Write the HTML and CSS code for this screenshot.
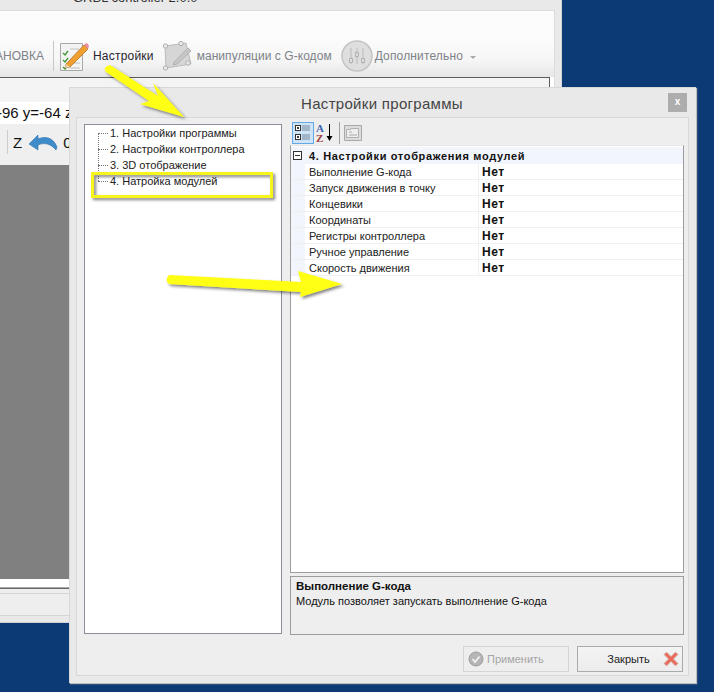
FILE: index.html
```html
<!DOCTYPE html>
<html lang="ru">
<head>
<meta charset="utf-8">
<title>Настройки программы</title>
<link rel="stylesheet" href="styles.css">
</head>
<body>
<div class="desktop">
  <section class="main-window">
    <div class="main-title"><span>GRBL controller 2.0.0</span></div>
    <div class="main-client">
      <div class="ribbon-tabs"></div>
      <div class="ribbon">
        <span class="rb-text dim clip">АНОВКА</span>
        <span class="rb-sep"></span>
        <svg class="rb-icon" width="31" height="32" viewBox="0 0 31 32">
          <path d="M1.500 3.500h22v27h-22z" fill="#f3f3f3" stroke="#a8a8a8"/>
          <path d="M4 13l2 2 3-4M4 20l2 2 3-4M4 27l2 2 3-4" fill="none" stroke="#3d9a35" stroke-width="1.300"/>
          <path d="M11 9h9M13 23h8M11 28h10" stroke="#c0c0c0"/>
          <path d="M7 24L25 5l4 4-18 18-5 1z" fill="#f0a030" stroke="#a8641a" stroke-width=".7"/>
          <path d="M25 5l2-2q2 0 3 3l-1 3z" fill="#e98fa0"/>
          <path d="M7 24l-1 4 5-1z" fill="#e8d8b8"/>
        </svg>
        <span class="rb-text active">Настройки</span>
        <svg class="rb-icon shape" width="31" height="30" viewBox="0 0 31 30">
          <path d="M3 5L24 2l5 21-25 4z" fill="#d6d6d6" stroke="#bcbcbc"/>
          <g fill="#e8e8e8" stroke="#b0b0b0"><circle cx="3.500" cy="5" r="2.200"/><circle cx="19" cy="2.500" r="2.200"/><circle cx="26" cy="22" r="2.200"/><circle cx="3.500" cy="27" r="2.200"/></g>
          <path d="M12 21l14-14 3 3-14 13-4 1z" fill="#c6c6c6" stroke="#b2b2b2"/>
        </svg>
        <span class="rb-text dim">манипуляции с G-кодом</span>
        <svg class="rb-icon more" width="32" height="32" viewBox="0 0 32 32">
          <circle cx="16" cy="16" r="15" fill="#dedede" stroke="#c4c4c4" stroke-width="1.500"/>
          <path d="M10 8v16M16 8v16M22 8v16" stroke="#bababa"/>
          <path d="M8.500 18.500h3v4h-3zM14.500 12.500h3v4h-3zM20.500 18.500h3v4h-3z" fill="#dedede" stroke="#b0b0b0"/>
        </svg>
        <span class="rb-text dim tight">Дополнительно</span>
        <span class="rb-caret"></span>
      </div>
      <div class="workspace">
        <div class="gap-row"></div>
        <div class="coords">-96 y=-64 z</div>
        <div class="tools">
          <span class="tool-sep"></span>
          <span class="tool-text">Z</span>
          <svg width="30" height="20" viewBox="0 0 30 20">
            <path d="M1 12l9-9v4c7-3 15-2 19 8l-1 3c-5-6-11-8-18-5v5z" fill="#3f8ccb" stroke="#2e6fa8" stroke-width=".6"/>
          </svg>
          <span class="tool-text">0</span>
        </div>
        <div class="view"></div>
        <div class="view-foot"></div>
      </div>
    </div>
    <div class="status-a"></div>
    <div class="status-b"></div>
  </section>

  <section class="dialog">
    <header class="dlg-head">
      <h1 class="dlg-title">Настройки программы</h1>
      <span class="dlg-close">x</span>
    </header>
    <div class="dlg-frame">
      <div class="dlg-body">
        <ul class="tree">
          <li class="tree-item">1. Настройки программы</li>
          <li class="tree-item">2. Настройки контроллера</li>
          <li class="tree-item">3. 3D отображение</li>
          <li class="tree-item">4. Натройка модулей</li>
        </ul>
        <div class="props">
          <div class="props-bar">
            <span class="pb-btn on">
              <svg width="20" height="20" viewBox="0 0 20 20">
                <g fill="#fff" stroke="#333"><rect x="2.500" y="2.500" width="5" height="5"/><rect x="2.500" y="11.500" width="5" height="5"/></g>
                <path d="M4 5h2M4 14h2M5 4v2M5 13v2" stroke="#000"/>
                <path d="M9 3h8M9 5h8M9 7h8M9 12h8M9 14h8M9 16h8" stroke="#7b8797"/>
              </svg>
            </span>
            <span class="pb-btn">
              <svg width="20" height="22" viewBox="0 0 20 22">
                <text x="1" y="10" class="az a">A</text>
                <text x="1" y="20" class="az z">Z</text>
                <path d="M14.500 2v15" stroke="#000"/>
                <path d="M11.500 14h6l-3 5z" fill="#000"/>
              </svg>
            </span>
            <span class="pb-sep"></span>
            <span class="pb-btn dis">
              <svg width="18" height="16" viewBox="0 0 18 16">
                <path d="M.5.5h17v15H.5z" fill="#dcdcdc" stroke="#a8a8a8"/>
                <path d="M2.500 4.500h4v-1h8v9h-12z" fill="#eee" stroke="#b0b0b0"/>
                <path d="M5 7h3M5 10h8" stroke="#aaa"/>
              </svg>
            </span>
          </div>
          <div class="grid-box">
            <div class="cat-row">
              <span class="cat-toggle"></span>
              <span class="cat-name">4. Настройки отображения модулей</span>
            </div>
            <div class="prop-row"><span class="prop-name">Выполнение G-кода</span><span class="prop-val">Нет</span></div>
            <div class="prop-row"><span class="prop-name">Запуск движения в точку</span><span class="prop-val">Нет</span></div>
            <div class="prop-row"><span class="prop-name">Концевики</span><span class="prop-val">Нет</span></div>
            <div class="prop-row"><span class="prop-name">Координаты</span><span class="prop-val">Нет</span></div>
            <div class="prop-row"><span class="prop-name">Регистры контроллера</span><span class="prop-val">Нет</span></div>
            <div class="prop-row"><span class="prop-name">Ручное управление</span><span class="prop-val">Нет</span></div>
            <div class="prop-row"><span class="prop-name">Скорость движения</span><span class="prop-val">Нет</span></div>
          </div>
          <div class="help-box">
            <div class="help-title">Выполнение G-кода</div>
            <div class="help-text">Модуль позволяет запускать выполнение G-кода</div>
          </div>
        </div>
      </div>
      <footer class="dlg-foot">
        <button class="btn disabled" type="button">
          <svg class="btn-ok" width="16" height="16" viewBox="0 0 16 16">
            <circle cx="8" cy="8" r="7" fill="#b5b5b5" stroke="#9c9c9c"/>
            <path d="M4.500 8l2.500 3 4.500-5.500" fill="none" stroke="#f2f2f2" stroke-width="1.800"/>
          </svg>
          <span>Применить</span>
        </button>
        <button class="btn" type="button">
          <span class="btn-label">Закрыть</span>
          <svg class="btn-x" width="16" height="16" viewBox="0 0 16 16">
            <path d="M1 3.500L3.500 1 8 5.500 12.500 1 15 3.500 10.500 8 15 12.500 12.500 15 8 10.500 3.500 15 1 12.500 5.500 8z" fill="#ec6a5c" stroke="#c9c2b8" stroke-width=".8"/>
          </svg>
        </button>
      </footer>
    </div>
  </section>

  <svg class="overlay" width="714" height="692" viewBox="0 0 714 692">
    <defs>
      <filter id="shadow" x="-20%" y="-20%" width="140%" height="140%">
        <feDropShadow dx="2" dy="2" stdDeviation="1.500" flood-color="#000" flood-opacity=".5"/>
      </filter>
    </defs>
    <g filter="url(#shadow)">
      <path d="M106 72Q102 67 110 65L158 96 153 83 184 117 140 104 149 101z" fill="#ffff14"/>
      <path d="M169 275L301 282 298 271 342 284 300 297 301 292 169 284Q164 280 169 275z" fill="#ffff14"/>
      <rect x="92.500" y="173.500" width="179" height="23" fill="none" stroke="#f5f51e" stroke-width="3"/>
    </g>
  </svg>
</div>
</body>
</html>
```

FILE: styles.css
```css
* { box-sizing: border-box; }
html, body { margin: 0; padding: 0; }
body { font-family: "Liberation Sans", Arial, sans-serif; font-size: 11px; color: #111; }
.desktop { position: relative; width: 714px; height: 692px; overflow: hidden; background: #0b3a74; }

/* background window */
.main-window { position: absolute; left: 0; top: 0; width: 562px; height: 623px; background: #e9e9e9; border-right: 1px solid #d5d5d5; border-bottom: 1px solid #d0d0d0; display: flex; flex-direction: column; }
.main-title { height: 10px; flex: none; padding-left: 73px; font-size: 13px; line-height: 13px; color: #333; white-space: nowrap; overflow: hidden; }
.main-title span { display: block; margin-top: -9px; }
.main-client { width: 555px; height: 579px; flex: none; background: #fff; border-top: 1px solid #dcdcdc; border-right: 1px solid #dcdcdc; border-bottom: 1px solid #666; display: flex; flex-direction: column; }
.ribbon-tabs { height: 24px; background: #fcfcfc; flex: none; }
.ribbon { height: 42px; flex: none; display: flex; align-items: center; background: linear-gradient(#fcfcfc, #f6f6f6 60%, #e6e6e6); font-size: 12px; white-space: nowrap; }
.rb-text.clip { width: 44px; overflow: hidden; direction: rtl; text-align: right; }
.rb-text.dim { color: #7d8288; }
.rb-text.active { color: #2a2530; margin-left: 3px; letter-spacing: .2px; }
.rb-sep { width: 1px; height: 30px; background: #c8c8c8; margin: 0 5px 0 9px; }
.rb-icon { flex: none; }
.rb-icon.shape { margin-left: 8px; }
.rb-icon.more { margin-left: 9px; }
.rb-text.dim:not(.clip) { margin-left: 4px; letter-spacing: .05px; }
.rb-text.dim.tight:not(.clip) { margin-left: 2px; letter-spacing: .15px; }
.rb-caret { margin-left: 7px; margin-top: 2px; border: 3px solid transparent; border-top: 3px solid #a8a8a8; border-bottom: 0; width: 0; height: 0; }
.workspace { flex: 1; display: flex; flex-direction: column; min-height: 0; border-top: 1px solid #5c5c5c; border-right: 1px solid #5c5c5c; margin-right: 4px; background: #fff; }
.gap-row { height: 24px; background: #f4f4f4; flex: none; }
.coords { height: 22px; line-height: 22px; font-size: 15px; margin-left: -3px; color: #111; background: #fff; white-space: nowrap; flex: none; }
.tools { height: 41px; flex: none; display: flex; align-items: center; background: #efefef; padding-bottom: 5px; }
.tool-sep { width: 1px; height: 24px; background: #ccc; margin-left: 7px; }
.tool-text { font-size: 15px; margin-left: 5px; }
.tools svg { margin-left: 6px; }
.view { flex: 1; background: #808080; }
.view-foot { height: 9px; background: #fff; border-bottom: 1px solid #aaa; flex: none; }
.status-a { height: 5px; flex: none; background: #eee; border-bottom: 1px solid #d5d5d5; }
.status-b { height: 22px; flex: none; background: #eee; border-bottom: 1px solid #d5d5d5; }

/* settings dialog */
.dialog { position: absolute; left: 69px; top: 87px; width: 627px; height: 596px; background: #e9e9e9; border-top: 1px solid #d8d8d8; border-left: 1px solid #d8d8d8; box-shadow: 1px 1px 1px #bbb; padding: 0 7px 7px 6px; display: flex; flex-direction: column; }
.dlg-head { height: 29px; flex: none; display: flex; align-items: center; justify-content: center; position: relative; }
.dlg-title { margin: 1px 0 0 -1px; font-weight: 400; font-size: 15px; color: #454545; letter-spacing: .3px; }
.dlg-close { position: absolute; right: 2px; top: 5px; width: 19px; height: 19px; background: #adadad; color: #fff; font-weight: 700; font-size: 10px; line-height: 18px; text-align: center; }
.dlg-frame { flex: 1; min-height: 0; background: #eee; border: 1px solid #d8d8d8; display: flex; flex-direction: column; padding: 6px 4px 0 7px; }
.dlg-body { height: 511px; flex: none; display: flex; gap: 8px; }
.tree { width: 198px; height: 510px; flex: none; margin: 0; padding: 0 0 0 25px; list-style: none; background: #fff; border: 1px solid #8b8f9b; }
.tree-item { height: 16px; line-height: 16px; color: #222; position: relative; white-space: nowrap; }
.tree-item::before { content: ""; position: absolute; left: -12px; top: -8px; width: 1px; height: 16px; border-left: 1px dotted #777; }
.tree-item:first-child::before { display: none; }
.tree-item::after { content: ""; position: absolute; left: -12px; top: 8px; width: 10px; border-top: 1px dotted #777; }
.props { flex: 1; min-width: 0; display: flex; flex-direction: column; margin-top: -2px; }
.props-bar { height: 23px; flex: none; display: flex; align-items: flex-start; padding-left: 2px; }
.pb-btn { width: 22px; height: 22px; flex: none; display: flex; align-items: center; justify-content: center; border: 1px solid transparent; }
.pb-btn.on { background: #cde4f7; border-color: #66a7e8; }
.pb-btn.dis { margin-left: 2px; }
.pb-sep { width: 1px; height: 22px; background: #a0a0a0; margin-left: 3px; }
.az { font: 700 11px "Liberation Serif", serif; }
.az.a { fill: #3f63b0; }
.az.z { fill: #a04040; }
.grid-box { height: 428px; flex: none; background: #fff; border: 1px solid #9c9c9c; border-top-color: #e6e6e6; padding-top: 1px; }
.cat-row { height: 17px; display: flex; align-items: center; background: #f2f5fb; font-weight: 700; }
.cat-toggle { width: 9px; height: 9px; border: 1px solid #333; margin-left: 2px; flex: none; background: linear-gradient(#333, #333) center / 5px 1px no-repeat #fff; }
.cat-name { margin-left: 7px; font-size: 11px; letter-spacing: .65px; color: #111; }
.prop-row { height: 16px; display: flex; border-bottom: 1px solid #f0f0f0; background: linear-gradient(90deg, #f2f5fb 14px, transparent 14px); line-height: 16px; }
.prop-name { width: 174px; flex: none; margin-left: 14px; padding-left: 4px; border-right: 1px solid #f0f0f0; color: #222; white-space: nowrap; }
.prop-val { padding-left: 3px; font-weight: 700; font-size: 12px; letter-spacing: .5px; color: #111; }
.help-box { height: 59px; flex: none; margin-top: 3px; background: #eee; border: 1px solid #9c9c9c; padding: 2px 5px; color: #111; line-height: 14px; }
.help-title { font-weight: 700; font-size: 11.500px; height: 15px; }
.dlg-foot { flex: 1; display: flex; justify-content: flex-end; align-items: flex-start; gap: 8px; padding: 11px 1px 0 0; }
.btn { width: 106px; height: 26px; padding: 0 3px 0 4px; display: flex; align-items: center; font: 11px "Liberation Sans", Arial, sans-serif; background: linear-gradient(#f4f4f4, #ececec); border: 1px solid #ababab; color: #222; }
.btn.disabled { border-color: #d6d6d6; background: #eee; color: #a5a5a5; }
.btn-ok { margin-right: 3px; flex: none; }
.btn-label { flex: 1; text-align: center; padding-left: 15px; }
.btn-x { flex: none; margin-left: 3px; }

/* annotations painted on the screenshot */
.overlay { position: absolute; left: 0; top: 0; pointer-events: none; }
```
